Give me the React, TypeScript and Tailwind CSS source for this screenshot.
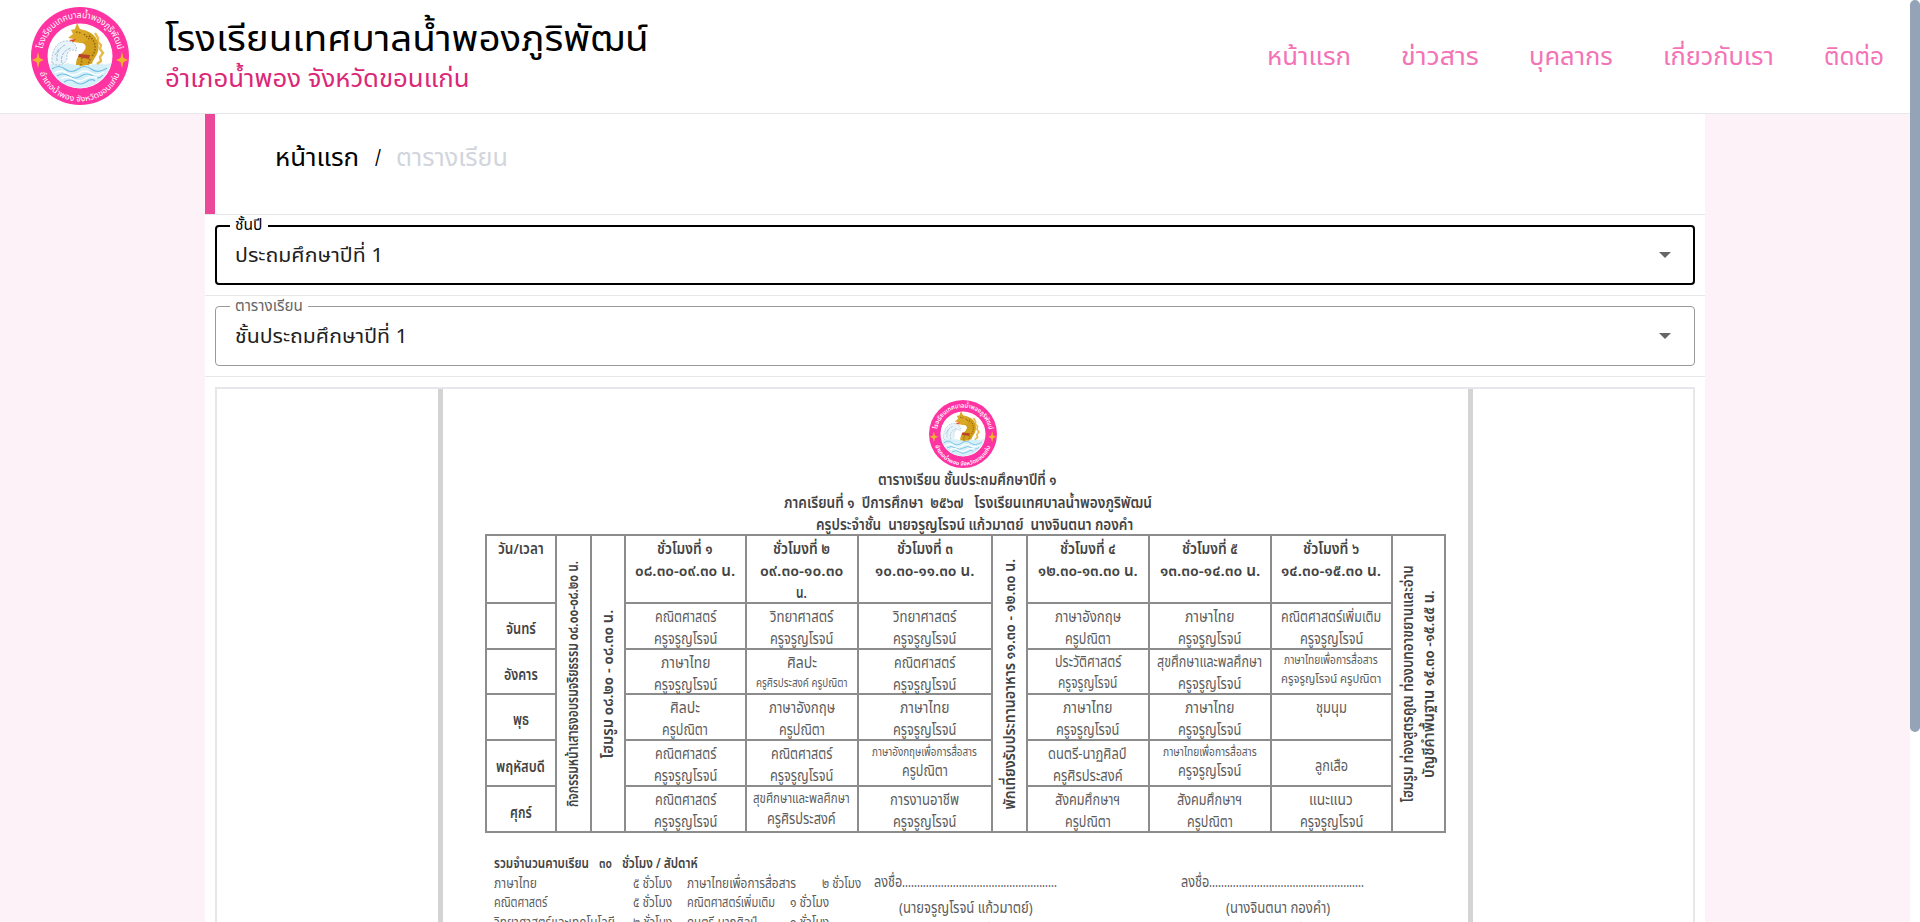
import { useLayoutEffect, useRef, useState } from "react";

type FitProps = { t: string; w: number; className?: string };

/* Single line of text, condensed or widened to an exact width. */
function Fit({ t, w, className = "" }: FitProps) {
  const ref = useRef<HTMLSpanElement>(null);
  const [k, setK] = useState(1);
  useLayoutEffect(() => {
    if (ref.current && ref.current.offsetWidth > 0) setK(w / ref.current.offsetWidth);
  }, [w, t]);
  return (
    <span className={"block shrink-0 whitespace-pre " + className} style={{ width: w }}>
      <span ref={ref} className="inline-block origin-left" style={{ transform: `scaleX(${k})` }}>
        {t}
      </span>
    </span>
  );
}

function Logo({ className }: { className: string }) {
  return (
    <svg viewBox="0 0 98 98" className={"overflow-visible " + className}>
      <defs>
        <path id="ringTop" d="M11 49 A38 38 0 0 1 87 49" />
        <path id="ringBottom" d="M6.500 52 A42.500 42.500 0 0 0 91.500 52" />
      </defs>
      <circle cx="49" cy="49" r="49" fill="#ff33a1" />
      <circle cx="49" cy="49" r="32.500" fill="#fff" />
      <path d="M18 58 C24 55 30 59 37 56 C45 60 52 54 60 58 C67 55 73 59 80 56 C77 70 64 81 49 81 C34 81 22 70 18 58Z" fill="#d6f0fa" />
      <path d="M21 62 q7 -5 13 0 t13 0 t13 0 t16 -1 M26 69 q6 -4 12 0 t12 0 t12 0 t10 -1 M33 75 q6 -4 11 0 t11 0 t9 -1" fill="none" stroke="#74bfe2" strokeWidth="1.200" />
      <path d="M24 66 q6 -4 12 0 t12 0 t12 0 t13 -1 M30 72 q6 -4 12 0 t12 0 t12 -1" fill="none" stroke="#fff" strokeWidth="1.500" />
      <path d="M21 56 C20 44 26 35 34 34 C42 33 47 39 45 44 C40 41 35 44 36 52 C34 58 26 60 21 56Z" fill="#e9f3fa" stroke="#a9c6d8" strokeWidth="1" strokeDasharray="2 1.200" />
      <path d="M26 54 C25 46 29 39 35 38 M31 56 C29 49 33 43 40 41 M24 48 L28 42" fill="none" stroke="#9abfd4" strokeWidth="1" strokeDasharray="3 1" />
      <path d="M64 26 L67 31 L67 35 L70 38 L69 42 L72 46 L69 50 L70 54 L66 57" fill="none" stroke="#e6bb4a" strokeWidth="2.400" />
      <path d="M55 58 C53 49 63 47 61 38 C59 31 54 30 49 29" fill="none" stroke="#d3a01e" strokeWidth="13" />
      <path d="M45 58 C45 51 48 47 53 45 L58 58Z" fill="#d3a01e" />
      <path d="M56 24 L49 22 L46 16 L44 22 L40 23 L42 27 L37 31 L43 32 L42 35 L50 36 L57 33Z" fill="#dca827" />
      <path d="M58 29 C65 34 66 43 61 49 M53 27 L58 32 M59 52 L57 58 M51 51 L50 58 M45 25 L51 26" fill="none" stroke="#8f6c12" strokeWidth="1.700" strokeDasharray="1.500 1.500" />
      <path d="M48 47 L59 48 L58 52 L47 50Z" fill="#b8452a" />
      <path d="M38 33 L45 32 L42 35Z" fill="#e2402f" />
      <path d="M7 45 L8.500 51 L13 53 L8.500 55 L7 61 L5.500 55 L1 53 L5.500 51Z" fill="#f0b429" />
      <path d="M91 45 L92.500 51 L97 53 L92.500 55 L91 61 L89.500 55 L85 53 L89.500 51Z" fill="#f0b429" />
      <text className="fill-white text-[9px]">
        <textPath href="#ringTop" startOffset="7" textLength="106" lengthAdjust="spacingAndGlyphs">โรงเรียนเทศบาลน้ำพองภูริพัฒน์</textPath>
      </text>
      <text className="fill-white text-[8px]">
        <textPath href="#ringBottom" startOffset="14" textLength="104" lengthAdjust="spacingAndGlyphs">อำเภอน้ำพอง  จังหวัดขอนแก่น</textPath>
      </text>
    </svg>
  );
}

const nav: [string, number][] = [
  ["หน้าแรก", 84],
  ["ข่าวสาร", 78],
  ["บุคลากร", 84],
  ["เกี่ยวกับเรา", 111],
  ["ติดต่อ", 60],
];

function Header() {
  return (
    <header className="flex h-[114px] items-center border-b border-gray-200 bg-white pl-[31px] pr-[26px]">
      <Logo className="mb-[2px] h-[98px] w-[98px]" />
      <div className="ml-[36px] flex h-[98px] flex-col text-black">
        <Fit t="โรงเรียนเทศบาลน้ำพองภูริพัฒน์" w={484} className="h-[50px] text-[36px] leading-[64px]" />
        <Fit t="อำเภอน้ำพอง จังหวัดขอนแก่น" w={305} className="text-[24px] leading-[44px] text-[#db2777]" />
      </div>
      <nav className="ml-auto flex gap-[50px] pt-[2px] text-[24px] leading-[32px] text-[#f472b6]">
        {nav.map(([t, w]) => (
          <Fit key={t} t={t} w={w} />
        ))}
      </nav>
    </header>
  );
}

function Select({ label, labelW, value, valueW, active }: { label: string; labelW: number; value: string; valueW: number; active?: boolean }) {
  return (
    <div className="border-b border-gray-200 p-[10px]">
      <div
        className={
          "relative flex h-[60px] items-center justify-between rounded-[4px] text-[#212121] " +
          (active ? "border-2 border-black pl-[18px] pr-[22px]" : "border border-[#9b9b9b] pl-[19px] pr-[23px]")
        }
      >
        <span className={"absolute bg-white px-[5px] text-[15px] leading-[20px] " + (active ? "-top-[11px] left-[13px] text-black" : "-top-[10px] left-[14px] text-[#666]")}>
          <Fit t={label} w={labelW} />
        </span>
        <Fit t={value} w={valueW} className="pt-[2px] text-[20px] leading-[28px]" />
        <svg viewBox="0 0 12 6" className="h-[6px] w-[12px]">
          <path d="M0 0h12L6 6z" fill="#666" />
        </svg>
      </div>
    </div>
  );
}

/* text, width, baseline offset from the cell's top, font size */
type L = [string, number, number, number?];

const KJ = "ครูจรูญโรจน์";
const MATH = "คณิตศาสตร์";
const THAI = "ภาษาไทย";
const KP = "ครูปณิตา";

const head: L[][] = [
  [["วัน/เวลา", 46, 17]],
  [["ชั่วโมงที่ ๑", 56, 17], ["๐๘.๓๐-๐๙.๓๐ น.", 100, 39]],
  [["ชั่วโมงที่ ๒", 57, 17], ["๐๙.๓๐-๑๐.๓๐", 83, 39], ["น.", 11, 61]],
  [["ชั่วโมงที่ ๓", 56, 17], ["๑๐.๓๐-๑๑.๓๐ น.", 99, 39]],
  [["ชั่วโมงที่ ๔", 56, 17], ["๑๒.๓๐-๑๓.๓๐ น.", 100, 39]],
  [["ชั่วโมงที่ ๕", 56, 17], ["๑๓.๓๐-๑๔.๓๐ น.", 100, 39]],
  [["ชั่วโมงที่ ๖", 56, 17], ["๑๔.๓๐-๑๕.๓๐ น.", 100, 39]],
];

const days: { day: L; cells: L[][] }[] = [
  {
    day: ["จันทร์", 30, 29],
    cells: [
      [[MATH, 61, 17], [KJ, 63, 39]],
      [["วิทยาศาสตร์", 63, 17], [KJ, 63, 39]],
      [["วิทยาศาสตร์", 63, 17], [KJ, 63, 39]],
      [["ภาษาอังกฤษ", 66, 17], [KP, 46, 39]],
      [[THAI, 49, 17], [KJ, 63, 39]],
      [["คณิตศาสตร์เพิ่มเติม", 100, 17], [KJ, 63, 39]],
    ],
  },
  {
    day: ["อังคาร", 34, 29],
    cells: [
      [[THAI, 49, 17], [KJ, 63, 39]],
      [["ศิลปะ", 30, 17], ["ครูศิรประสงค์ ครูปณิตา", 91, 36, 12]],
      [[MATH, 61, 17], [KJ, 63, 39]],
      [["ประวัติศาสตร์", 66, 16], [KJ, 59, 37]],
      [["สุขศึกษาและพลศึกษา", 105, 16], [KJ, 63, 38]],
      [["ภาษาไทยเพื่อการสื่อสาร", 94, 13, 12], ["ครูจรูญโรจน์ ครูปณิตา", 100, 32, 13]],
    ],
  },
  {
    day: ["พุธ", 16, 29],
    cells: [
      [["ศิลปะ", 30, 17], [KP, 46, 39]],
      [["ภาษาอังกฤษ", 66, 17], [KP, 46, 39]],
      [[THAI, 49, 17], [KJ, 63, 39]],
      [[THAI, 49, 17], [KJ, 63, 39]],
      [[THAI, 49, 17], [KJ, 63, 39]],
      [["ชุมนุม", 31, 17]],
    ],
  },
  {
    day: ["พฤหัสบดี", 49, 30],
    cells: [
      [[MATH, 61, 17], [KJ, 63, 39]],
      [[MATH, 61, 17], [KJ, 63, 39]],
      [["ภาษาอังกฤษเพื่อการสื่อสาร", 105, 14, 12], [KP, 46, 34]],
      [["ดนตรี-นาฏศิลป์", 79, 17], ["ครูศิรประสงค์", 70, 39]],
      [["ภาษาไทยเพื่อการสื่อสาร", 94, 14, 12], [KJ, 63, 34]],
      [["ลูกเสือ", 33, 29]],
    ],
  },
  {
    day: ["ศุกร์", 22, 30],
    cells: [
      [[MATH, 61, 17], [KJ, 63, 39]],
      [["สุขศึกษาและพลศึกษา", 97, 15, 14], ["ครูศิรประสงค์", 69, 36]],
      [["การงานอาชีพ", 69, 17], [KJ, 63, 39]],
      [["สังคมศึกษาฯ", 65, 17], [KP, 46, 39]],
      [["สังคมศึกษาฯ", 65, 17], [KP, 46, 39]],
      [["แนะแนว", 44, 17], [KJ, 63, 39]],
    ],
  },
];

function Cell({ lines, strong }: { lines: L[]; strong?: boolean }) {
  return (
    <div className={"flex flex-col items-center bg-white " + (strong ? "font-semibold text-[#444]" : "text-[#5c5c5c]")}>
      {lines.map(([t, w, b, s = 15], i) => (
        <div key={i} className="flex items-end" style={{ height: b - (i ? lines[i - 1][2] : 3), fontSize: s }}>
          <Fit t={t} w={w} className="leading-[0]" />
        </div>
      ))}
    </div>
  );
}

function SideCell({ lines }: { lines: [string, number][] }) {
  return (
    <div className="flex items-center justify-center bg-white text-[15px] font-semibold text-[#444]">
      {lines.map(([t, w]) => (
        <div key={t} className="flex w-[22px] items-center justify-center">
          <div className="-rotate-90">
            <Fit t={t} w={w} className="pt-[2px] leading-[20px]" />
          </div>
        </div>
      ))}
    </div>
  );
}

function Timetable() {
  const row = (key: string, first: L[], cells: L[][], strong: boolean) => [
    <div key={key} className="col-start-1 grid"><Cell lines={first} strong /></div>,
    ...cells.map((c, i) => (
      <div key={key + i} className={"grid " + ["col-start-4", "col-start-5", "col-start-6", "col-start-8", "col-start-9", "col-start-10"][i]}>
        <Cell lines={c} strong={strong} />
      </div>
    )),
  ];
  return (
    <div className="ml-[42px] grid h-[299px] w-[961px] grid-cols-[68px_33px_32px_119px_110px_132px_33px_120px_120px_119px_51px] grid-rows-[66px_44px_43px_44px_44px_44px] gap-[2px] bg-[#8c8c8c] p-[2px]">
      {row("h", head[0], head.slice(1), true)}
      {days.map((d) => row(d.day[0], [d.day], d.cells, false))}
      <div className="col-start-2 row-span-6 row-start-1 grid"><SideCell lines={[["กิจกรรมหน้าเสาธงอบรมจริยธรรม ๐๘.๐๐-๐๘.๒๐ น.", 246]]} /></div>
      <div className="col-start-3 row-span-6 row-start-1 grid"><SideCell lines={[["โฮมรูม ๐๘.๒๐ - ๐๘.๓๐ น.", 149]]} /></div>
      <div className="col-start-7 row-span-6 row-start-1 grid"><SideCell lines={[["พักเที่ยงรับประทานอาหาร ๑๑.๓๐ - ๑๒.๓๐ น.", 251]]} /></div>
      <div className="col-start-11 row-span-6 row-start-1 grid">
        <SideCell lines={[["โฮมรูม ท่องสูตรคูณ ท่องบทอาขยานและอ่าน", 237], ["บัญชีคำพื้นฐาน ๑๕.๓๐ -๑๕.๔๕ น.", 188]]} />
      </div>
    </div>
  );
}

const totals: [string, number, string, string, number, string, string][] = [
  ["ภาษาไทย", 43, "๕ ชั่วโมง", "ภาษาไทยเพื่อการสื่อสาร", 109, "๒ ชั่วโมง", "ml-[26px]"],
  ["คณิตศาสตร์", 53, "๕ ชั่วโมง", "คณิตศาสตร์เพิ่มเติม", 88, "๑ ชั่วโมง", "ml-[15px]"],
  ["วิทยาศาสตร์และเทคโนโลยี", 121, "๒ ชั่วโมง", "ดนตรี-นาฏศิลป์", 70, "๑ ชั่วโมง", "ml-[33px]"],
];

function Signature({ name, w, pad }: { name: string; w: number; pad: string }) {
  return (
    <div className="flex w-[184px] flex-col items-center text-[15px] text-[#5c5c5c]">
      <div className="flex h-[26px]">
        <Fit t="ลงชื่อ" w={28} className="leading-[26px]" />
        <Fit t={".".repeat(52)} w={155} className="leading-[26px]" />
      </div>
      <div className={"flex flex-col items-center " + pad}>
        <Fit t={name} w={w} className="h-[23px] leading-[26px]" />
        <Fit t="ครูประจำชั้น" w={70} className="leading-[26px]" />
      </div>
    </div>
  );
}

function Sheet() {
  return (
    <div className="mx-auto h-full w-[1035px] overflow-hidden border-x-[5px] border-[#d4d4d4] bg-white">
      <div className="flex h-[145px] flex-col items-center pl-[16px] pt-[11px] font-semibold text-[#444]">
        <Logo className="h-[68px] w-[68px] shrink-0" />
        <div className="mt-[2px] flex flex-col items-center pl-[9px] text-[15px] leading-[22.500px]">
          <Fit t="ตารางเรียน ชั้นประถมศึกษาปีที่ ๑" w={179} />
          <Fit t="ภาคเรียนที่ ๑  ปีการศึกษา  ๒๕๖๗   โรงเรียนเทศบาลน้ำพองภูริพัฒน์" w={368} />
          <div className="pl-[13px]">
            <Fit t="ครูประจำชั้น  นายจรูญโรจน์ แก้วมาตย์  นางจินตนา กองคำ" w={317} />
          </div>
        </div>
      </div>
      <Timetable />
      <div className="flex pl-[51px] pt-[21px]">
        <div className="w-[380px] shrink-0 text-[14px] leading-[19.700px] text-[#5c5c5c]">
          <div className="flex gap-[10px] font-semibold text-[#444]">
            <Fit t="รวมจำนวนคาบเรียน" w={95} />
            <Fit t="๓๐" w={13} />
            <Fit t="ชั่วโมง / สัปดาห์" w={76} />
          </div>
          {totals.map(([a, aw, n, b, bw, m, ml]) => (
            <div key={a} className="flex">
              <div className="w-[139px]"><Fit t={a} w={aw} /></div>
              <div className="w-[54px]"><Fit t={n} w={39} /></div>
              <Fit t={b} w={bw} />
              <div className={ml}><Fit t={m} w={39} /></div>
            </div>
          ))}
        </div>
        <div className="flex gap-[123px] pt-[16px]">
          <Signature name="(นายจรูญโรจน์ แก้วมาตย์)" w={134} pad="" />
          <Signature name="(นางจินตนา กองคำ)" w={104} pad="pl-[10px]" />
        </div>
      </div>
    </div>
  );
}

export default function App() {
  return (
    <div className="flex h-[922px] w-[1920px] overflow-hidden bg-white font-['Noto_Sans_Thai','Noto_Sans',sans-serif]">
      <div className="flex w-[1910px] flex-col bg-[#fdf2f8]">
        <Header />
        <main className="mx-auto flex h-[808px] w-[1500px] flex-col bg-white">
          <div className="flex h-[101px] shrink-0 border-b border-gray-200">
            <div className="h-[100px] w-[10px] bg-[#ec4899]" />
            <div className="flex items-center pb-[11px] pl-[60px] text-[24px] leading-[32px] text-black">
              <Fit t="หน้าแรก" w={84} />
              <div className="ml-[16px]"><Fit t="/" w={6} /></div>
              <div className="ml-[15px] text-gray-300"><Fit t="ตารางเรียน" w={112} /></div>
            </div>
          </div>
          <Select label="ชั้นปี" labelW={28} value="ประถมศึกษาปีที่ 1" valueW={148} active />
          <Select label="ตารางเรียน" labelW={68} value="ชั้นประถมศึกษาปีที่ 1" valueW={173} />
          <div className="mx-[10px] mt-[10px] h-[560px] shrink-0 border-2 border-gray-200">
            <Sheet />
          </div>
        </main>
      </div>
      <div className="h-[732px] w-[10px] rounded-full bg-[#94a3b8]" />
    </div>
  );
}
